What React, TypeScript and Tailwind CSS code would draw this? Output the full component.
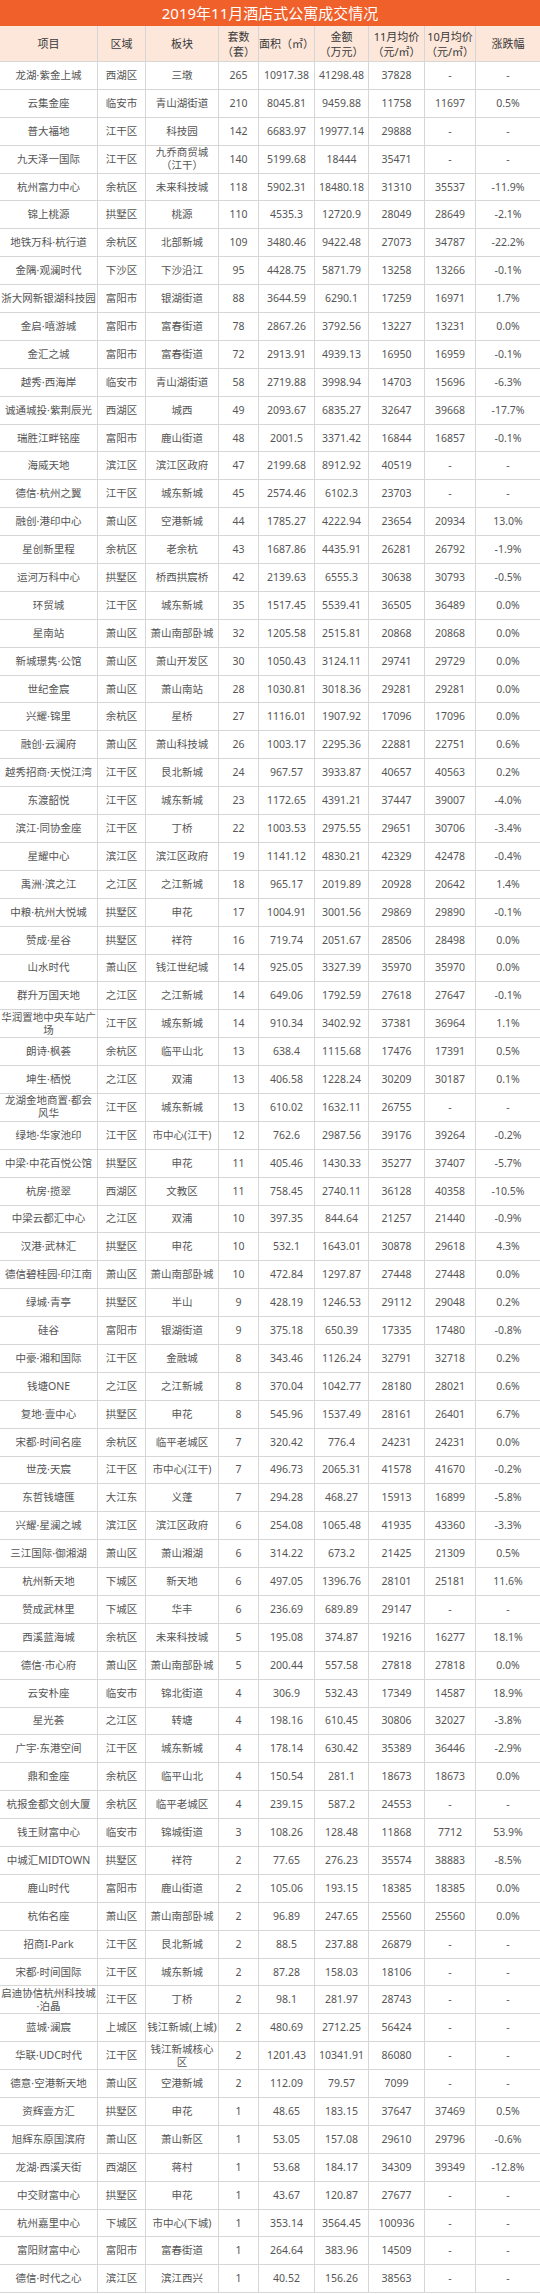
import React from 'react'

const cols = 'grid grid-cols-[98px_48px_73px_40px_56px_54px_56px_51px_64px]'

const head = ['项目', '区域', '板块', '套数\n（套）', '面积（㎡）', '金额\n（万元）', '11月均价\n（元/㎡）', '10月均价\n（元/㎡）', '涨跌幅']

const rows: string[][] = [
  ['龙湖·紫金上城', '西湖区', '三墩', '265', '10917.38', '41298.48', '37828', '-', '-'],
  ['云集金座', '临安市', '青山湖街道', '210', '8045.81', '9459.88', '11758', '11697', '0.5%'],
  ['普大福地', '江干区', '科技园', '142', '6683.97', '19977.14', '29888', '-', '-'],
  ['九天泽一国际', '江干区', '九乔商贸城\n（江干）', '140', '5199.68', '18444', '35471', '-', '-'],
  ['杭州富力中心', '余杭区', '未来科技城', '118', '5902.31', '18480.18', '31310', '35537', '-11.9%'],
  ['锦上桃源', '拱墅区', '桃源', '110', '4535.3', '12720.9', '28049', '28649', '-2.1%'],
  ['地铁万科·杭行道', '余杭区', '北部新城', '109', '3480.46', '9422.48', '27073', '34787', '-22.2%'],
  ['金隅·观澜时代', '下沙区', '下沙沿江', '95', '4428.75', '5871.79', '13258', '13266', '-0.1%'],
  ['浙大网新银湖科技园', '富阳市', '银湖街道', '88', '3644.59', '6290.1', '17259', '16971', '1.7%'],
  ['金启·嘻游城', '富阳市', '富春街道', '78', '2867.26', '3792.56', '13227', '13231', '0.0%'],
  ['金汇之城', '富阳市', '富春街道', '72', '2913.91', '4939.13', '16950', '16959', '-0.1%'],
  ['越秀·西海岸', '临安市', '青山湖街道', '58', '2719.88', '3998.94', '14703', '15696', '-6.3%'],
  ['诚通城投·紫荆辰光', '西湖区', '城西', '49', '2093.67', '6835.27', '32647', '39668', '-17.7%'],
  ['瑞胜江畔铭座', '富阳市', '鹿山街道', '48', '2001.5', '3371.42', '16844', '16857', '-0.1%'],
  ['海威天地', '滨江区', '滨江区政府', '47', '2199.68', '8912.92', '40519', '-', '-'],
  ['德信·杭州之翼', '江干区', '城东新城', '45', '2574.46', '6102.3', '23703', '-', '-'],
  ['融创·港印中心', '萧山区', '空港新城', '44', '1785.27', '4222.94', '23654', '20934', '13.0%'],
  ['星创新里程', '余杭区', '老余杭', '43', '1687.86', '4435.91', '26281', '26792', '-1.9%'],
  ['运河万科中心', '拱墅区', '桥西拱宸桥', '42', '2139.63', '6555.3', '30638', '30793', '-0.5%'],
  ['环贸城', '江干区', '城东新城', '35', '1517.45', '5539.41', '36505', '36489', '0.0%'],
  ['星南站', '萧山区', '萧山南部卧城', '32', '1205.58', '2515.81', '20868', '20868', '0.0%'],
  ['新城璟隽·公馆', '萧山区', '萧山开发区', '30', '1050.43', '3124.11', '29741', '29729', '0.0%'],
  ['世纪金宸', '萧山区', '萧山南站', '28', '1030.81', '3018.36', '29281', '29281', '0.0%'],
  ['兴耀·锦里', '余杭区', '星桥', '27', '1116.01', '1907.92', '17096', '17096', '0.0%'],
  ['融创·云澜府', '萧山区', '萧山科技城', '26', '1003.17', '2295.36', '22881', '22751', '0.6%'],
  ['越秀招商·天悦江湾', '江干区', '艮北新城', '24', '967.57', '3933.87', '40657', '40563', '0.2%'],
  ['东渡韶悦', '江干区', '城东新城', '23', '1172.65', '4391.21', '37447', '39007', '-4.0%'],
  ['滨江·同协金座', '江干区', '丁桥', '22', '1003.53', '2975.55', '29651', '30706', '-3.4%'],
  ['星耀中心', '滨江区', '滨江区政府', '19', '1141.12', '4830.21', '42329', '42478', '-0.4%'],
  ['禹洲·滨之江', '之江区', '之江新城', '18', '965.17', '2019.89', '20928', '20642', '1.4%'],
  ['中粮·杭州大悦城', '拱墅区', '申花', '17', '1004.91', '3001.56', '29869', '29890', '-0.1%'],
  ['赞成·星谷', '拱墅区', '祥符', '16', '719.74', '2051.67', '28506', '28498', '0.0%'],
  ['山水时代', '萧山区', '钱江世纪城', '14', '925.05', '3327.39', '35970', '35970', '0.0%'],
  ['群升万国天地', '之江区', '之江新城', '14', '649.06', '1792.59', '27618', '27647', '-0.1%'],
  ['华润置地中央车站广\n场', '江干区', '城东新城', '14', '910.34', '3402.92', '37381', '36964', '1.1%'],
  ['朗诗·枫荟', '余杭区', '临平山北', '13', '638.4', '1115.68', '17476', '17391', '0.5%'],
  ['坤生·栖悦', '之江区', '双浦', '13', '406.58', '1228.24', '30209', '30187', '0.1%'],
  ['龙湖金地商置·都会\n风华', '江干区', '城东新城', '13', '610.02', '1632.11', '26755', '-', '-'],
  ['绿地·华家池印', '江干区', '市中心(江干)', '12', '762.6', '2987.56', '39176', '39264', '-0.2%'],
  ['中梁·中花百悦公馆', '拱墅区', '申花', '11', '405.46', '1430.33', '35277', '37407', '-5.7%'],
  ['杭房·揽翠', '西湖区', '文教区', '11', '758.45', '2740.11', '36128', '40358', '-10.5%'],
  ['中梁云都汇中心', '之江区', '双浦', '10', '397.35', '844.64', '21257', '21440', '-0.9%'],
  ['汉港·武林汇', '拱墅区', '申花', '10', '532.1', '1643.01', '30878', '29618', '4.3%'],
  ['德信碧桂园·印江南', '萧山区', '萧山南部卧城', '10', '472.84', '1297.87', '27448', '27448', '0.0%'],
  ['绿城·青亭', '拱墅区', '半山', '9', '428.19', '1246.53', '29112', '29048', '0.2%'],
  ['硅谷', '富阳市', '银湖街道', '9', '375.18', '650.39', '17335', '17480', '-0.8%'],
  ['中豪·湘和国际', '江干区', '金融城', '8', '343.46', '1126.24', '32791', '32718', '0.2%'],
  ['钱塘ONE', '之江区', '之江新城', '8', '370.04', '1042.77', '28180', '28021', '0.6%'],
  ['复地·壹中心', '拱墅区', '申花', '8', '545.96', '1537.49', '28161', '26401', '6.7%'],
  ['宋都·时间名座', '余杭区', '临平老城区', '7', '320.42', '776.4', '24231', '24231', '0.0%'],
  ['世茂·天宸', '江干区', '市中心(江干)', '7', '496.73', '2065.31', '41578', '41670', '-0.2%'],
  ['东哲钱塘匯', '大江东', '义蓬', '7', '294.28', '468.27', '15913', '16899', '-5.8%'],
  ['兴耀·星澜之城', '滨江区', '滨江区政府', '6', '254.08', '1065.48', '41935', '43360', '-3.3%'],
  ['三江国际·御湘湖', '萧山区', '萧山湘湖', '6', '314.22', '673.2', '21425', '21309', '0.5%'],
  ['杭州新天地', '下城区', '新天地', '6', '497.05', '1396.76', '28101', '25181', '11.6%'],
  ['赞成武林里', '下城区', '华丰', '6', '236.69', '689.89', '29147', '-', '-'],
  ['西溪蓝海城', '余杭区', '未来科技城', '5', '195.08', '374.87', '19216', '16277', '18.1%'],
  ['德信·市心府', '萧山区', '萧山南部卧城', '5', '200.44', '557.58', '27818', '27818', '0.0%'],
  ['云安朴座', '临安市', '锦北街道', '4', '306.9', '532.43', '17349', '14587', '18.9%'],
  ['星光荟', '之江区', '转塘', '4', '198.16', '610.45', '30806', '32027', '-3.8%'],
  ['广宇·东港空间', '江干区', '城东新城', '4', '178.14', '630.42', '35389', '36446', '-2.9%'],
  ['鼎和金座', '余杭区', '临平山北', '4', '150.54', '281.1', '18673', '18673', '0.0%'],
  ['杭报金都文创大厦', '余杭区', '临平老城区', '4', '239.15', '587.2', '24553', '-', '-'],
  ['钱王财富中心', '临安市', '锦城街道', '3', '108.26', '128.48', '11868', '7712', '53.9%'],
  ['中城汇MIDTOWN', '拱墅区', '祥符', '2', '77.65', '276.23', '35574', '38883', '-8.5%'],
  ['鹿山时代', '富阳市', '鹿山街道', '2', '105.06', '193.15', '18385', '18385', '0.0%'],
  ['杭佑名座', '萧山区', '萧山南部卧城', '2', '96.89', '247.65', '25560', '25560', '0.0%'],
  ['招商I-Park', '江干区', '艮北新城', '2', '88.5', '237.88', '26879', '-', '-'],
  ['宋都·时间国际', '江干区', '城东新城', '2', '87.28', '158.03', '18106', '-', '-'],
  ['启迪协信杭州科技城\n·泊晶', '江干区', '丁桥', '2', '98.1', '281.97', '28743', '-', '-'],
  ['蓝城·澜宸', '上城区', '钱江新城(上城)', '2', '480.69', '2712.25', '56424', '-', '-'],
  ['华联·UDC时代', '江干区', '钱江新城核心\n区', '2', '1201.43', '10341.91', '86080', '-', '-'],
  ['德意·空港新天地', '萧山区', '空港新城', '2', '112.09', '79.57', '7099', '-', '-'],
  ['资辉壹方汇', '拱墅区', '申花', '1', '48.65', '183.15', '37647', '37469', '0.5%'],
  ['旭辉东原国滨府', '萧山区', '萧山新区', '1', '53.05', '157.08', '29610', '29796', '-0.6%'],
  ['龙湖·西溪天街', '西湖区', '蒋村', '1', '53.68', '184.17', '34309', '39349', '-12.8%'],
  ['中交财富中心', '拱墅区', '申花', '1', '43.67', '120.87', '27677', '-', '-'],
  ['杭州嘉里中心', '下城区', '市中心(下城)', '1', '353.14', '3564.45', '100936', '-', '-'],
  ['富阳财富中心', '富阳市', '富春街道', '1', '264.64', '383.96', '14509', '-', '-'],
  ['德信·时代之心', '滨江区', '滨江西兴', '1', '40.52', '156.26', '38563', '-', '-'],
]

const Cell = ({ text, last }: { text: string; last: boolean }) => (
  <div
    className={
      'flex flex-col items-center justify-center text-center border-b border-[#d6d6d6] ' +
      (last ? '' : 'border-r')
    }
  >
    {text.split('\n').map((line, i) => (
      <span key={i} className="whitespace-nowrap">
        {line}
      </span>
    ))}
  </div>
)

export default function App() {
  return (
    <div className="w-[540px] bg-white font-['Noto_Sans','Noto_Sans_CJK_SC',sans-serif] text-[10.5px] leading-[13px] text-[#555]">
      <div className="h-[26px] bg-[#f0602b] text-white text-[15px] flex items-center justify-center">
        2019年11月酒店式公寓成交情况
      </div>
      <div className={cols + ' h-[36px] bg-[#fde7da] text-[#383838] text-[11px] leading-[15px]'}>
        {head.map((h, i) => (
          <Cell key={i} text={h} last={i === head.length - 1} />
        ))}
      </div>
      {rows.map((r, ri) => (
        <div key={ri} className={cols + ' h-[27.9px]'}>
          {r.map((c, ci) => (
            <Cell key={ci} text={c} last={ci === r.length - 1} />
          ))}
        </div>
      ))}
    </div>
  )
}
